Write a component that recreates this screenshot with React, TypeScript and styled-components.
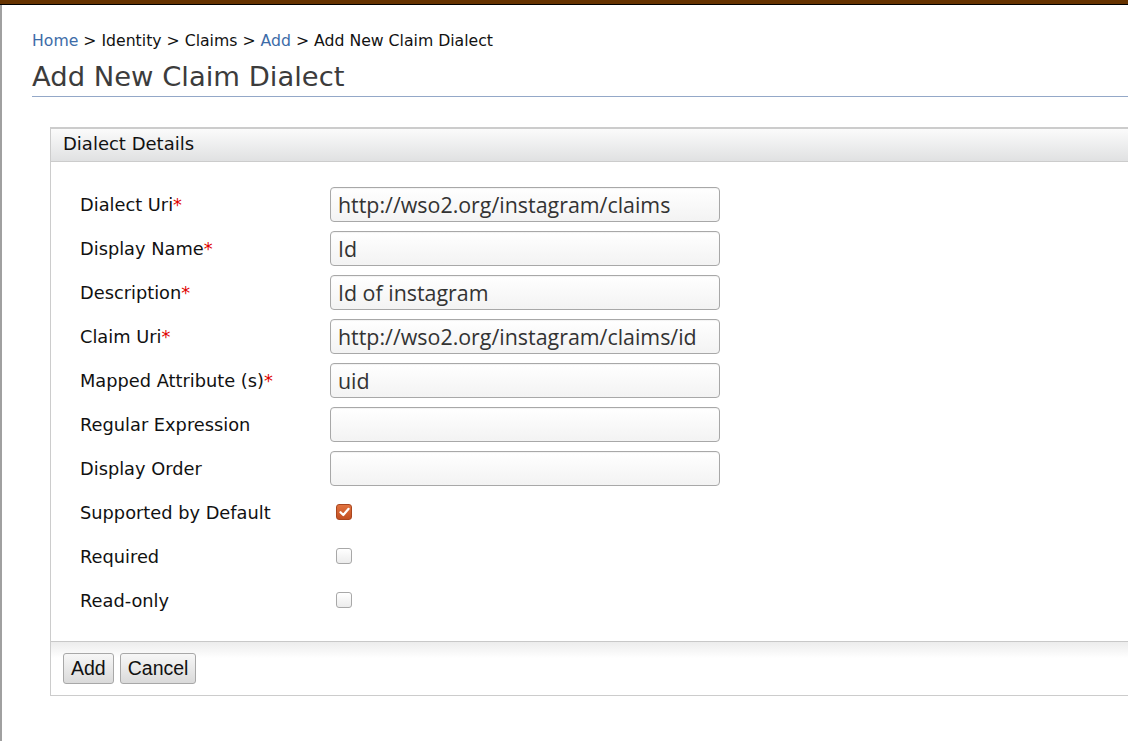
import * as React from "react";
import styled, { createGlobalStyle } from "styled-components";

const GlobalStyle = createGlobalStyle`
  html, body {
    margin: 0;
    padding: 0;
    background: #fff;
    overflow: hidden;
  }
  body {
    font-family: "DejaVu Sans", "Liberation Sans", sans-serif;
    color: #111;
  }
`;

const TopBar = styled.div`
  height: 4px;
  background-color: #663300;
  border-bottom: 1px solid #000;
`;

const Page = styled.div`
  border-left: 2px solid #a0a0a0;
  min-height: 736px;
  box-sizing: border-box;
  padding: 26px 0 0 30px;
`;

const Breadcrumb = styled.div`
  font-size: 15.7px;
  line-height: 19px;
  color: #111;
  white-space: nowrap;
`;

const Crumb = styled.a`
  color: #3d6ca8;
  text-decoration: none;
`;

const Title = styled.h1`
  margin: 11px 0 0;
  padding-bottom: 3px;
  font-size: 27.4px;
  line-height: 32px;
  font-weight: normal;
  color: #3c3c3c;
  border-bottom: 1px solid #94a8c8;
  white-space: nowrap;
`;

const Panel = styled.div`
  margin: 30px 0 0 18px;
  width: 1100px;
  border: 1px solid #cccccc;
  border-top: 2px solid #cccccc;
`;

const PanelHeader = styled.div`
  height: 33px;
  box-sizing: border-box;
  padding: 0 12px;
  line-height: 29px;
  font-size: 18px;
  color: #111;
  background: linear-gradient(#fbfbfb, #e0e1e2);
  border-bottom: 1px solid #cccccc;
`;

const PanelBody = styled.div`
  padding: 20px 0 19px 29px;
  display: grid;
  grid-template-columns: 250px 390px;
  grid-auto-rows: 44px;
  align-items: center;
`;

const Label = styled.label`
  font-size: 17.8px;
  color: #111;
  white-space: nowrap;
`;

const Star = styled.span`
  color: #e00000;
`;

const TextInput = styled.input`
  width: 390px;
  height: 35px;
  box-sizing: border-box;
  border: 1px solid #a8a8a8;
  border-radius: 4px;
  padding: 0 7px;
  font-family: "Open Sans", "Noto Sans", sans-serif;
  font-size: 21.4px;
  color: #333;
  background: linear-gradient(#ffffff, #f3f3f3);
  box-shadow: inset 0 1px 1px rgba(0, 0, 0, 0.05);
  outline: none;
`;

const CheckCell = styled.div`
  display: flex;
  align-items: center;
  height: 44px;
  padding-bottom: 1px;
  box-sizing: border-box;
`;

const Box = styled.span<{ $checked?: boolean }>`
  display: inline-flex;
  align-items: center;
  justify-content: center;
  width: 16px;
  height: 16px;
  box-sizing: border-box;
  margin-left: 6px;
  border-radius: 3px;
  border: 1px solid ${(p) => (p.$checked ? "#a9461f" : "#a8a8a8")};
  background: ${(p) =>
    p.$checked
      ? "linear-gradient(#e2733f, #c24f22)"
      : "linear-gradient(#ffffff, #ececec)"};
`;

const Footer = styled.div`
  border-top: 1px solid #c8c8c8;
  background: linear-gradient(#ececec 0, #ffffff 16px);
  padding: 11px 12px 11px;
  display: flex;
  gap: 6px;
`;

const Button = styled.button`
  height: 31px;
  padding: 0 7px;
  border: 1px solid #a8a8a8;
  border-radius: 3px;
  background: linear-gradient(#f7f7f7, #dadada);
  font-family: "Liberation Sans", Arial, sans-serif;
  font-size: 19.5px;
  color: #111;
`;

const CheckMark = () => (
  <svg width="11" height="10" viewBox="0 0 11 10">
    <path
      d="M1.5 5.2 L4.3 8 L9.6 1.8"
      fill="none"
      stroke="#fff"
      strokeWidth="2.2"
      strokeLinecap="round"
      strokeLinejoin="round"
    />
  </svg>
);

const textFields = [
  { label: "Dialect Uri", value: "http://wso2.org/instagram/claims", required: true },
  { label: "Display Name", value: "Id", required: true },
  { label: "Description", value: "Id of instagram", required: true },
  { label: "Claim Uri", value: "http://wso2.org/instagram/claims/id", required: true },
  { label: "Mapped Attribute (s)", value: "uid", required: true },
  { label: "Regular Expression", value: "", required: false },
  { label: "Display Order", value: "", required: false },
];

const checkFields = [
  { label: "Supported by Default", checked: true },
  { label: "Required", checked: false },
  { label: "Read-only", checked: false },
];

export default function App() {
  return (
    <>
      <GlobalStyle />
      <TopBar />
      <Page>
        <Breadcrumb>
          <Crumb href="#">Home</Crumb> &gt; Identity &gt; Claims &gt;{" "}
          <Crumb href="#">Add</Crumb> &gt; Add New Claim Dialect
        </Breadcrumb>
        <Title>Add New Claim Dialect</Title>
        <Panel>
          <PanelHeader>Dialect Details</PanelHeader>
          <PanelBody>
            {textFields.map((f) => (
              <React.Fragment key={f.label}>
                <Label>
                  {f.label}
                  {f.required && <Star>*</Star>}
                </Label>
                <TextInput defaultValue={f.value} />
              </React.Fragment>
            ))}
            {checkFields.map((f) => (
              <React.Fragment key={f.label}>
                <Label>{f.label}</Label>
                <CheckCell>
                  <Box $checked={f.checked}>{f.checked && <CheckMark />}</Box>
                </CheckCell>
              </React.Fragment>
            ))}
          </PanelBody>
          <Footer>
            <Button>Add</Button>
            <Button>Cancel</Button>
          </Footer>
        </Panel>
      </Page>
    </>
  );
}
